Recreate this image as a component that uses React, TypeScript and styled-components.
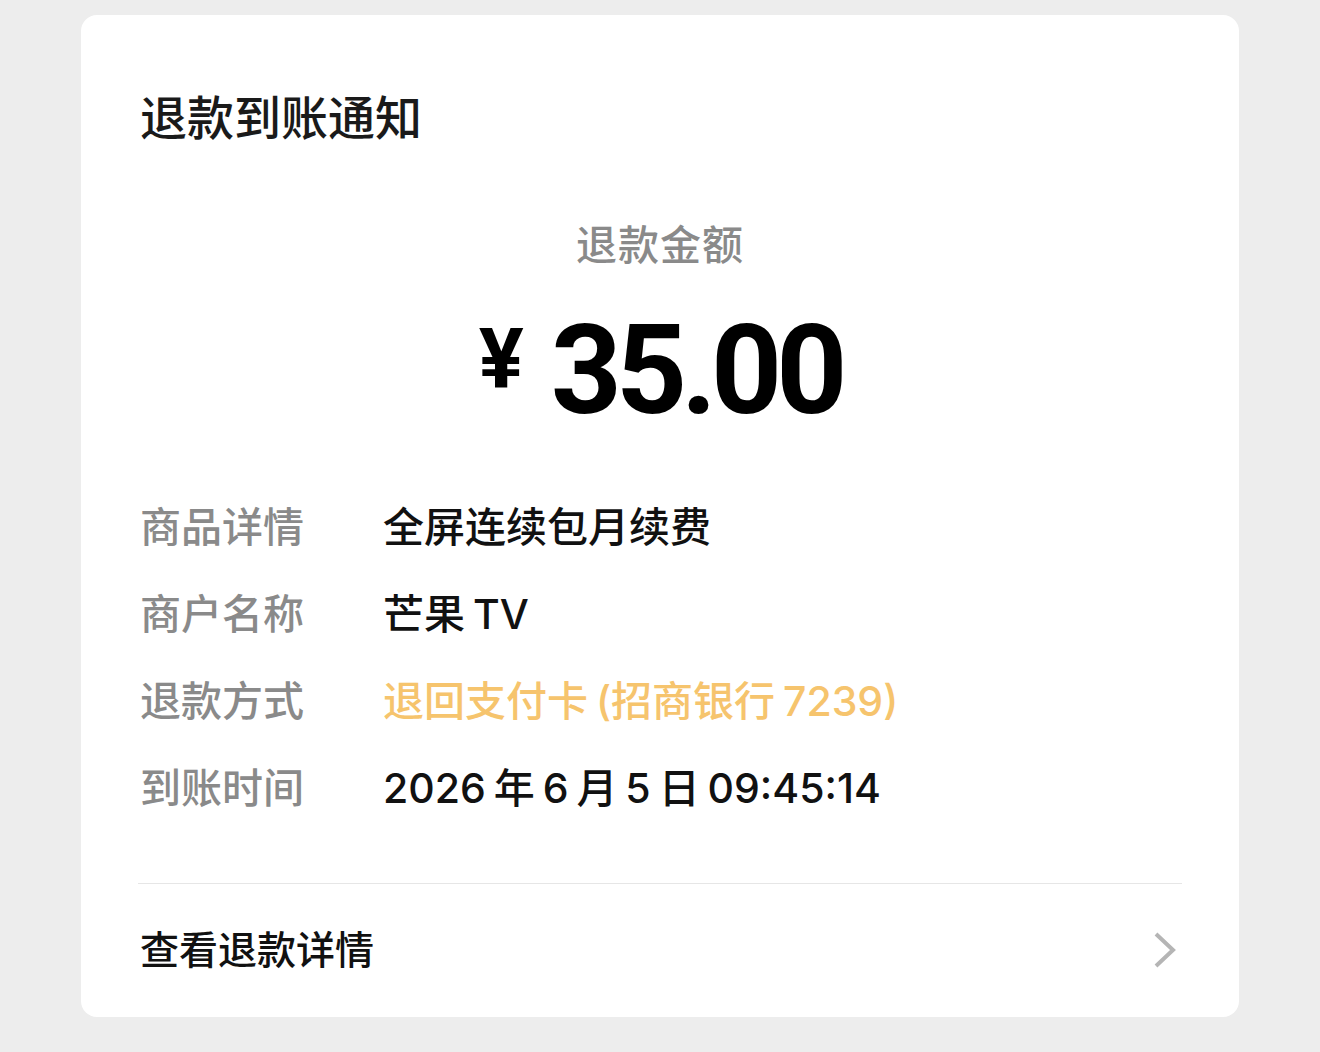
import React from 'react'
import styled, { createGlobalStyle } from 'styled-components'

const GlobalStyle = createGlobalStyle`
  html, body {
    margin: 0;
    padding: 0;
    background: #ededed;
  }
  body {
    font-family: "Noto Sans CJK SC", sans-serif;
    -webkit-font-smoothing: antialiased;
  }
`

const Page = styled.div`
  min-height: 1052px;
  padding: 15px 81px 35px;
  box-sizing: border-box;
  background: #ededed;
`

const Card = styled.section`
  background: #fff;
  border-radius: 16px;
  padding: 77px 57px 0;
  display: flex;
  flex-direction: column;
`

const Title = styled.h1`
  margin: 0;
  padding-left: 2px;
  font-size: 47px;
  line-height: 46px;
  font-weight: 500;
  color: #1a1a1a;
  font-family: "Noto Sans CJK SC", sans-serif;
`

const AmountLabel = styled.div`
  margin-top: 79px;
  text-align: center;
  font-size: 41px;
  line-height: 50px;
  color: #8a8a8a;
  font-weight: 500;
  letter-spacing: 1px;
`

const Amount = styled.div`
  margin-top: 44px;
  height: 120px;
  display: flex;
  justify-content: center;
  align-items: center;
  gap: 27px;
  color: #000;
  font-family: "Roboto", "Noto Sans CJK SC", sans-serif;
  font-weight: 700;
`

const Currency = styled.span`
  font-size: 84px;
  line-height: 1;
  margin-bottom: 22px;
`

const Figure = styled.span`
  font-size: 124px;
  line-height: 1;
  letter-spacing: -6px;
`

const Rows = styled.div`
  margin-top: 49px;
  display: flex;
  flex-direction: column;
`

const Row = styled.div`
  display: grid;
  grid-template-columns: 243px 1fr;
  align-items: center;
  height: 87px;
  padding-left: 2px;
`

const Label = styled.span`
  font-size: 41px;
  color: #8a8a8a;
  font-weight: 500;
  white-space: nowrap;
`

const Value = styled.span<{ $accent?: boolean }>`
  font-size: 41px;
  font-family: "Inter", "Noto Sans CJK SC", sans-serif;
  font-weight: 500;
  word-spacing: -3px;
  color: ${({ $accent }) => ($accent ? '#f6c46d' : '#111')};
  white-space: nowrap;
`

const Divider = styled.hr`
  margin: 55px 0 0;
  border: none;
  border-top: 1px solid #e6e6e6;
`

const Footer = styled.div`
  height: 133px;
  display: flex;
  align-items: center;
  justify-content: space-between;
  padding-left: 2px;
`

const FooterText = styled.span`
  font-size: 39px;
  font-weight: 500;
  color: #111;
  line-height: 1;
  margin-bottom: 6px;
`

const Chevron = () => (
  <svg width="30" height="44" viewBox="0 0 30 44" fill="none">
    <polyline points="4,5 21,21 4,37" stroke="#b5b5b5" strokeWidth="4" />
  </svg>
)

const rows = [
  { label: '商品详情', value: '全屏连续包月续费' },
  { label: '商户名称', value: '芒果 TV' },
  { label: '退款方式', value: '退回支付卡 (招商银行 7239)', accent: true },
  { label: '到账时间', value: '2026 年 6 月 5 日 09:45:14' },
]

export default function App() {
  return (
    <Page>
      <GlobalStyle />
      <Card>
        <Title>退款到账通知</Title>
        <AmountLabel>退款金额</AmountLabel>
        <Amount>
          <Currency>¥</Currency>
          <Figure>35.00</Figure>
        </Amount>
        <Rows>
          {rows.map(r => (
            <Row key={r.label}>
              <Label>{r.label}</Label>
              <Value $accent={r.accent}>{r.value}</Value>
            </Row>
          ))}
        </Rows>
        <Divider />
        <Footer>
          <FooterText>查看退款详情</FooterText>
          <Chevron />
        </Footer>
      </Card>
    </Page>
  )
}
